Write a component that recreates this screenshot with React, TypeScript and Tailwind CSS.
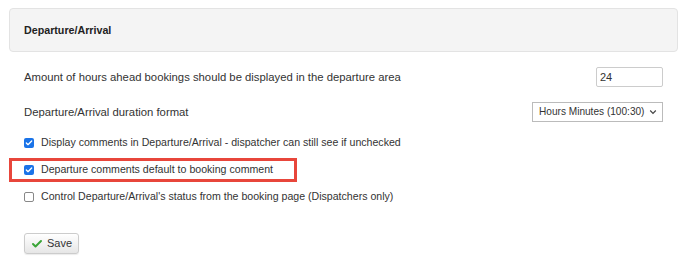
import { Check } from 'lucide-react';

function CheckRow({ label, checked, highlight }: { label: string; checked?: boolean; highlight?: boolean }) {
  return (
    <div className={highlight ? '-ml-[15px] flex h-[24px] w-[288px] items-center border-[3px] border-[#e8463b] pl-[12px]' : 'flex h-[24px] items-center'}>
      <span
        className={
          checked
            ? 'flex h-[10px] w-[10px] items-center justify-center rounded-[2px] bg-[#1a73e8]'
            : 'h-[10px] w-[10px] rounded-[2px] border border-[#888] bg-white'
        }
      >
        {checked && <Check className="h-[8px] w-[8px] text-white" strokeWidth={4} />}
      </span>
      <span className="ml-[7px] text-[10.6px]">{label}</span>
    </div>
  );
}

export default function App() {
  return (
    <div className="h-[263px] w-[688px] bg-white font-['Liberation_Sans',Arial,sans-serif] text-[11.3px] text-[#333]">
      <div className="pl-[9px] pr-[10px] pt-[8px]">
        <div className="flex h-[44px] items-center rounded-[4px] border border-[#e3e3e3] bg-[#f4f4f4] pl-[14px]">
          <h2 className="text-[10.7px] font-bold text-[#222]">Departure/Arrival</h2>
        </div>
      </div>

      <div className="pl-[24px] pr-[25px]">
        <div className="mt-[15px] flex h-[20px] items-center justify-between">
          <span>Amount of hours ahead bookings should be displayed in the departure area</span>
          <input
            defaultValue="24"
            className="h-[20px] w-[67px] rounded-[2px] border border-[#ccc] px-[3px] text-[11px] outline-none"
          />
        </div>

        <div className="mt-[15px] flex h-[20px] items-center justify-between">
          <span>Departure/Arrival duration format</span>
          <div className="flex h-[20px] w-[131px] items-center justify-between whitespace-nowrap border border-[#bbb] bg-white pl-[6px] pr-[5px]">
            <span className="text-[10.1px]">Hours Minutes (100:30)</span>
            <svg width="8" height="6" viewBox="0 0 8 6" className="text-[#444]">
              <path d="M1.2 1.5 L4 4.3 L6.8 1.5" fill="none" stroke="currentColor" strokeWidth="1.2" />
            </svg>
          </div>
        </div>

        <div className="mt-[9px] flex flex-col gap-[3px]">
          <CheckRow label="Display comments in Departure/Arrival - dispatcher can still see if unchecked" checked />
          <CheckRow label="Departure comments default to booking comment" checked highlight />
          <CheckRow label="Control Departure/Arrival's status from the booking page (Dispatchers only)" />
        </div>

        <button className="mt-[24px] flex h-[21px] w-[55px] items-center justify-center gap-[4px] rounded-[3px] border border-[#ccc] bg-gradient-to-b from-white to-[#e6e6e6] text-[11px] text-[#333] shadow-[0_1px_1px_rgba(0,0,0,0.08)]">
          <Check className="h-[12px] w-[12px] text-[#3aa537]" strokeWidth={4} />
          Save
        </button>
      </div>
    </div>
  );
}
